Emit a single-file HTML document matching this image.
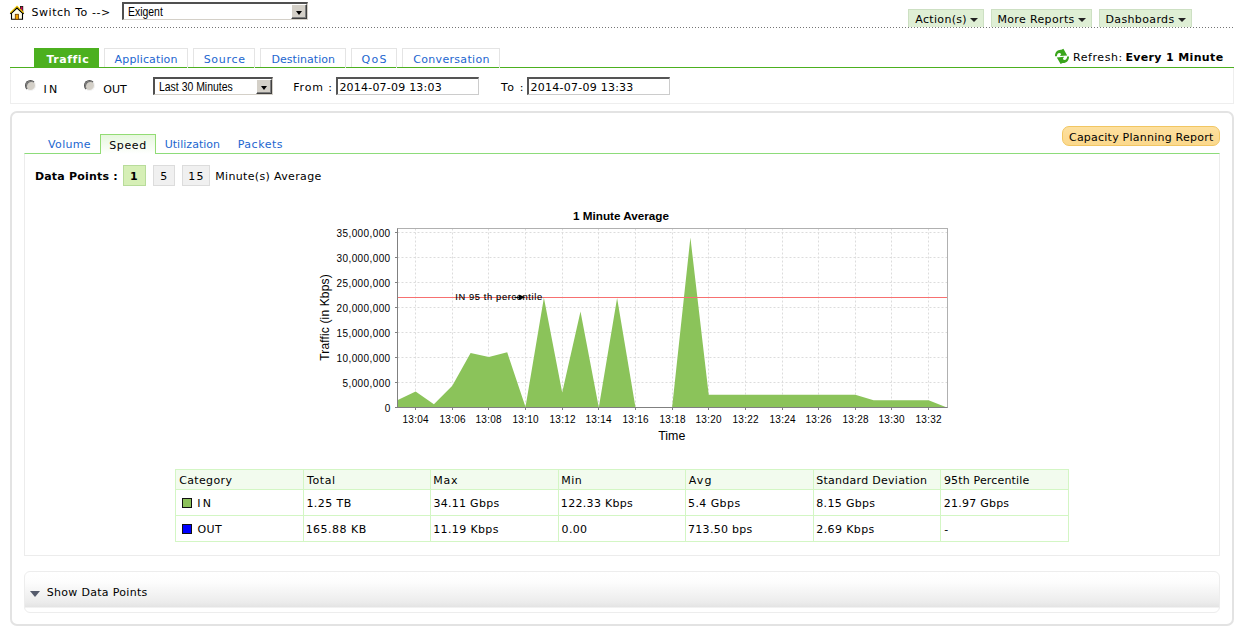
<!DOCTYPE html>
<html>
<head>
<meta charset="utf-8">
<title>Traffic Report</title>
<style>
html,body{margin:0;padding:0;background:#fff;}
body{width:1239px;height:633px;position:relative;overflow:hidden;font-family:"DejaVu Sans","Liberation Sans",sans-serif;font-size:11px;color:#000;}
.a{position:absolute;white-space:nowrap;box-sizing:border-box;}
.t{position:absolute;white-space:nowrap;font-size:11px;line-height:14px;z-index:5;}
.dots{position:absolute;left:11px;top:27px;width:1223px;height:1px;background:repeating-linear-gradient(90deg,#757575 0,#757575 1px,transparent 1px,transparent 3px);}
.btn{position:absolute;top:9px;height:18px;background:#dfefd5;border:1px solid #cde0c3;border-bottom:none;box-sizing:border-box;}
.caret{position:absolute;top:8px;width:0;height:0;border-left:4px solid transparent;border-right:4px solid transparent;border-top:4px solid #222;}
.tab{position:absolute;top:48px;height:19px;box-sizing:border-box;border:1px solid #e4e4e4;border-bottom:none;background:#fff;}
.tab.on{background:#4cb01f;border-color:#4cb01f;}
.sel{position:absolute;box-sizing:border-box;background:#fff;border:2px solid;border-color:#505050 #d4d0c8 #d4d0c8 #505050;border-right-width:1px;border-bottom-width:1px;font-family:"Liberation Sans",sans-serif;font-size:12px;}
.sel .arrow{position:absolute;right:0;top:0;bottom:0;width:16px;background:#d4d0c8;border:1px solid;border-color:#fff #404040 #404040 #fff;box-shadow:inset -1px -1px 0 #808080;box-sizing:border-box;}
.sel .arrow:after{content:"";position:absolute;left:3.5px;top:6px;border:3.5px solid transparent;border-top:4px solid #000;border-bottom:none;}
.sel .st{position:absolute;top:1px;line-height:14px;transform:scaleX(0.87);transform-origin:0 0;white-space:nowrap;}
.inp{position:absolute;box-sizing:border-box;background:#fff;border:1px solid;border-color:#555 #ccc #ccc #555;border-top-width:2px;border-left-width:2px;}
.radio{position:absolute;width:11px;height:11px;border-radius:50%;box-sizing:border-box;background:#d4d0c8;border:1px solid;border-color:#555 #f4f4f4 #f4f4f4 #555;box-shadow:inset 1px 1px 0 #777;transform:rotate(0deg);}
.hl{position:absolute;height:1px;background:#d3f6c4;}
.vl{position:absolute;width:1px;background:#d3f6c4;}
.sw{position:absolute;width:10px;height:10px;box-sizing:border-box;border:1px solid #111;}
</style>
</head>
<body>

<!-- top bar -->
<svg class="a" style="left:8px;top:4px" width="18" height="18" viewBox="8 4 18 18">
  <rect x="20.4" y="6.4" width="2.4" height="5.5" fill="#e0004a" stroke="#111" stroke-width="0.8"/>
  <path d="M11.5 13.2 L17 8 L22.5 13.2 L22.5 19.3 L11.5 19.3 Z" fill="#fffde8" stroke="#000" stroke-width="1.1"/>
  <path d="M10.3 13.7 L17 7.3 L23.7 13.7" fill="none" stroke="#000" stroke-width="1.5"/>
  <path d="M10.4 12.7 L17 6.3 L23.6 12.7" fill="none" stroke="#f0c808" stroke-width="1.2"/>
  <rect x="15.3" y="14.3" width="3.2" height="5" fill="#f5a800" stroke="#6b3a00" stroke-width="0.8"/>
</svg>
<div class="sel" style="left:122px;top:2px;width:186px;height:18px;"><span class="st" style="left:3.8px;">Exigent</span><span class="arrow"></span></div>
<div class="dots"></div>

<div class="btn" style="left:908px;width:76px;"><span class="caret" style="left:61px"></span></div>
<div class="btn" style="left:991px;width:101px;"><span class="caret" style="left:86px"></span></div>
<div class="btn" style="left:1099px;width:93px;"><span class="caret" style="left:78px"></span></div>

<!-- main tabs -->
<div class="tab on" style="left:34px;width:65px;"></div>
<div class="tab" style="left:104px;width:84px;"></div>
<div class="tab" style="left:193px;width:62px;"></div>
<div class="tab" style="left:260px;width:86px;"></div>
<div class="tab" style="left:351px;width:46px;"></div>
<div class="tab" style="left:402px;width:98px;"></div>
<div class="a" style="left:10px;top:67px;width:1224px;height:1px;background:#4cb01f;"></div>
<div class="a" style="left:187px;top:67px;width:1px;height:1px;background:#e4efe0;z-index:3"></div><div class="a" style="left:254px;top:67px;width:1px;height:1px;background:#e4efe0;z-index:3"></div><div class="a" style="left:345px;top:67px;width:1px;height:1px;background:#e4efe0;z-index:3"></div><div class="a" style="left:396px;top:67px;width:1px;height:1px;background:#e4efe0;z-index:3"></div><div class="a" style="left:499px;top:67px;width:1px;height:1px;background:#e4efe0;z-index:3"></div>
<div class="a" style="left:10px;top:68px;width:1224px;height:36px;border:1px solid #eeeeee;border-top:none;"></div>

<!-- refresh -->
<svg class="a" style="left:1053px;top:48px" width="18" height="17" viewBox="1053 48 18 17">
  <g fill="#3aa51c">
  <path id="rf" d="M1055 56.3 C1054.8 52.4 1057.6 49.5 1061.4 49.8 L1063.4 48.7 L1067.2 55.4 L1060 56.1 L1061.2 53.9 C1059.6 52.0 1057 52.8 1056.9 56.3 Z"/>
  <path d="M1055 56.3 C1054.8 52.4 1057.6 49.5 1061.4 49.8 L1063.4 48.7 L1067.2 55.4 L1060 56.1 L1061.2 53.9 C1059.6 52.0 1057 52.8 1056.9 56.3 Z" transform="rotate(180 1062 56.4)"/>
  </g>
</svg>

<!-- filter row -->
<div class="radio" style="left:25px;top:80px"></div>
<div class="radio" style="left:84px;top:80px"></div>
<div class="sel" style="left:153px;top:77px;width:120px;height:18px;"><span class="st" style="left:3.5px;">Last 30 Minutes</span><span class="arrow"></span></div>
<div class="inp" style="left:336px;top:77px;width:143px;height:18px;"></div>
<div class="inp" style="left:527px;top:77px;width:143px;height:18px;"></div>

<!-- outer panel -->
<div class="a" style="left:10px;top:111px;width:1224px;height:515px;border:2px solid #e3e3e3;border-radius:7px;"></div>

<!-- sub tabs -->
<div class="a" style="left:100px;top:134px;width:56px;height:20px;border:1px solid #93dc74;border-bottom:none;background:linear-gradient(#e6f7dd,#fff);z-index:2"></div>
<div class="a" style="left:24px;top:153px;width:1196px;height:403px;border:1px solid #ececec;border-top:1px solid #8ddc7a;"></div>

<div class="a" style="left:1062px;top:126px;width:158px;height:20px;border:1px solid #f1c662;border-radius:7px;background:linear-gradient(#fde09f,#fbd88c);"></div>

<!-- data points -->
<div class="a" style="left:123px;top:165px;width:23px;height:21px;border:1px solid #b8dc9a;background:#d6efb6;"></div>
<div class="a" style="left:153px;top:165px;width:22px;height:21px;border:1px solid #dcdcdc;background:#f0f0f0;"></div>
<div class="a" style="left:182px;top:165px;width:28px;height:21px;border:1px solid #dcdcdc;background:#f0f0f0;"></div>

<svg class="a" id="chart" style="left:300px;top:200px" width="680" height="250" viewBox="300 200 680 250" font-family="Liberation Sans, sans-serif">
<rect x="397.5" y="228.5" width="550.0" height="179.0" fill="#fff" stroke="none"/>
<line x1="397.5" y1="407.5" x2="947.5" y2="407.5" stroke="#dcdcdc" stroke-width="1" stroke-dasharray="2 2"/>
<line x1="397.5" y1="382.5" x2="947.5" y2="382.5" stroke="#dcdcdc" stroke-width="1" stroke-dasharray="2 2"/>
<line x1="397.5" y1="357.5" x2="947.5" y2="357.5" stroke="#dcdcdc" stroke-width="1" stroke-dasharray="2 2"/>
<line x1="397.5" y1="332.5" x2="947.5" y2="332.5" stroke="#dcdcdc" stroke-width="1" stroke-dasharray="2 2"/>
<line x1="397.5" y1="307.5" x2="947.5" y2="307.5" stroke="#dcdcdc" stroke-width="1" stroke-dasharray="2 2"/>
<line x1="397.5" y1="282.5" x2="947.5" y2="282.5" stroke="#dcdcdc" stroke-width="1" stroke-dasharray="2 2"/>
<line x1="397.5" y1="257.5" x2="947.5" y2="257.5" stroke="#dcdcdc" stroke-width="1" stroke-dasharray="2 2"/>
<line x1="397.5" y1="232.5" x2="947.5" y2="232.5" stroke="#dcdcdc" stroke-width="1" stroke-dasharray="2 2"/>
<line x1="415.5" y1="228.5" x2="415.5" y2="407.5" stroke="#dcdcdc" stroke-width="1" stroke-dasharray="2 2"/>
<line x1="452.5" y1="228.5" x2="452.5" y2="407.5" stroke="#dcdcdc" stroke-width="1" stroke-dasharray="2 2"/>
<line x1="488.5" y1="228.5" x2="488.5" y2="407.5" stroke="#dcdcdc" stroke-width="1" stroke-dasharray="2 2"/>
<line x1="525.5" y1="228.5" x2="525.5" y2="407.5" stroke="#dcdcdc" stroke-width="1" stroke-dasharray="2 2"/>
<line x1="562.5" y1="228.5" x2="562.5" y2="407.5" stroke="#dcdcdc" stroke-width="1" stroke-dasharray="2 2"/>
<line x1="598.5" y1="228.5" x2="598.5" y2="407.5" stroke="#dcdcdc" stroke-width="1" stroke-dasharray="2 2"/>
<line x1="635.5" y1="228.5" x2="635.5" y2="407.5" stroke="#dcdcdc" stroke-width="1" stroke-dasharray="2 2"/>
<line x1="672.5" y1="228.5" x2="672.5" y2="407.5" stroke="#dcdcdc" stroke-width="1" stroke-dasharray="2 2"/>
<line x1="708.5" y1="228.5" x2="708.5" y2="407.5" stroke="#dcdcdc" stroke-width="1" stroke-dasharray="2 2"/>
<line x1="745.5" y1="228.5" x2="745.5" y2="407.5" stroke="#dcdcdc" stroke-width="1" stroke-dasharray="2 2"/>
<line x1="782.5" y1="228.5" x2="782.5" y2="407.5" stroke="#dcdcdc" stroke-width="1" stroke-dasharray="2 2"/>
<line x1="818.5" y1="228.5" x2="818.5" y2="407.5" stroke="#dcdcdc" stroke-width="1" stroke-dasharray="2 2"/>
<line x1="855.5" y1="228.5" x2="855.5" y2="407.5" stroke="#dcdcdc" stroke-width="1" stroke-dasharray="2 2"/>
<line x1="891.5" y1="228.5" x2="891.5" y2="407.5" stroke="#dcdcdc" stroke-width="1" stroke-dasharray="2 2"/>
<line x1="928.5" y1="228.5" x2="928.5" y2="407.5" stroke="#dcdcdc" stroke-width="1" stroke-dasharray="2 2"/>
<polygon points="397.3,407.5 397.3,400.3 415.6,391.5 433.9,404.3 452.3,385.7 470.6,353.0 488.9,357.0 507.2,352.3 525.5,407.0 543.9,297.7 562.2,392.5 580.5,311.5 598.8,407.5 617.1,298.0 635.5,407.5 653.8,407.5 672.1,407.5 690.4,237.5 708.7,394.7 727.1,394.7 745.4,394.7 763.7,394.7 782.0,394.7 800.3,394.7 818.7,394.7 837.0,394.7 855.3,394.7 873.6,400.2 891.9,400.2 910.3,400.2 928.6,400.2 946.9,407.5 946.9,407.5" fill="#8bc35a"/>
<line x1="397.5" y1="297.5" x2="947.5" y2="297.5" stroke="#f77070" stroke-width="1"/>
<text x="455.2" y="299.5" font-size="9.3" fill="#000" stroke="#000" stroke-width="0.12" letter-spacing="0.64">IN 95 th percentile</text>
<path d="M514.5 297.5 H520" stroke="#000" stroke-width="1" fill="none"/><path d="M518.8 294.4 L525 297.3 L518.8 300 Z" fill="#000"/>
<rect x="397.5" y="228.5" width="550.0" height="179.0" fill="none" stroke="#b0b0b0" stroke-width="1"/>
<line x1="397.5" y1="228.5" x2="397.5" y2="408.0" stroke="#808080" stroke-width="1"/>
<line x1="397.5" y1="407.5" x2="947.5" y2="407.5" stroke="#808080" stroke-width="1"/>
<line x1="395.0" y1="407.5" x2="397.5" y2="407.5" stroke="#808080" stroke-width="1"/>
<text x="390.6" y="412.4" font-size="10" letter-spacing="0.4" text-anchor="end">0</text>
<line x1="395.0" y1="382.5" x2="397.5" y2="382.5" stroke="#808080" stroke-width="1"/>
<text x="390.6" y="387.4" font-size="10" letter-spacing="0.4" text-anchor="end">5,000,000</text>
<line x1="395.0" y1="357.5" x2="397.5" y2="357.5" stroke="#808080" stroke-width="1"/>
<text x="390.6" y="362.4" font-size="10" letter-spacing="0.4" text-anchor="end">10,000,000</text>
<line x1="395.0" y1="332.5" x2="397.5" y2="332.5" stroke="#808080" stroke-width="1"/>
<text x="390.6" y="337.4" font-size="10" letter-spacing="0.4" text-anchor="end">15,000,000</text>
<line x1="395.0" y1="307.5" x2="397.5" y2="307.5" stroke="#808080" stroke-width="1"/>
<text x="390.6" y="312.4" font-size="10" letter-spacing="0.4" text-anchor="end">20,000,000</text>
<line x1="395.0" y1="282.5" x2="397.5" y2="282.5" stroke="#808080" stroke-width="1"/>
<text x="390.6" y="287.4" font-size="10" letter-spacing="0.4" text-anchor="end">25,000,000</text>
<line x1="395.0" y1="257.5" x2="397.5" y2="257.5" stroke="#808080" stroke-width="1"/>
<text x="390.6" y="262.4" font-size="10" letter-spacing="0.4" text-anchor="end">30,000,000</text>
<line x1="395.0" y1="232.5" x2="397.5" y2="232.5" stroke="#808080" stroke-width="1"/>
<text x="390.6" y="237.4" font-size="10" letter-spacing="0.4" text-anchor="end">35,000,000</text>
<line x1="415.5" y1="407.5" x2="415.5" y2="410.0" stroke="#808080" stroke-width="1"/>
<text x="415.7" y="423.4" font-size="10" letter-spacing="0.3" text-anchor="middle">13:04</text>
<line x1="452.5" y1="407.5" x2="452.5" y2="410.0" stroke="#808080" stroke-width="1"/>
<text x="452.7" y="423.4" font-size="10" letter-spacing="0.3" text-anchor="middle">13:06</text>
<line x1="488.5" y1="407.5" x2="488.5" y2="410.0" stroke="#808080" stroke-width="1"/>
<text x="488.7" y="423.4" font-size="10" letter-spacing="0.3" text-anchor="middle">13:08</text>
<line x1="525.5" y1="407.5" x2="525.5" y2="410.0" stroke="#808080" stroke-width="1"/>
<text x="525.7" y="423.4" font-size="10" letter-spacing="0.3" text-anchor="middle">13:10</text>
<line x1="562.5" y1="407.5" x2="562.5" y2="410.0" stroke="#808080" stroke-width="1"/>
<text x="562.7" y="423.4" font-size="10" letter-spacing="0.3" text-anchor="middle">13:12</text>
<line x1="598.5" y1="407.5" x2="598.5" y2="410.0" stroke="#808080" stroke-width="1"/>
<text x="598.7" y="423.4" font-size="10" letter-spacing="0.3" text-anchor="middle">13:14</text>
<line x1="635.5" y1="407.5" x2="635.5" y2="410.0" stroke="#808080" stroke-width="1"/>
<text x="635.7" y="423.4" font-size="10" letter-spacing="0.3" text-anchor="middle">13:16</text>
<line x1="672.5" y1="407.5" x2="672.5" y2="410.0" stroke="#808080" stroke-width="1"/>
<text x="672.7" y="423.4" font-size="10" letter-spacing="0.3" text-anchor="middle">13:18</text>
<line x1="708.5" y1="407.5" x2="708.5" y2="410.0" stroke="#808080" stroke-width="1"/>
<text x="708.7" y="423.4" font-size="10" letter-spacing="0.3" text-anchor="middle">13:20</text>
<line x1="745.5" y1="407.5" x2="745.5" y2="410.0" stroke="#808080" stroke-width="1"/>
<text x="745.7" y="423.4" font-size="10" letter-spacing="0.3" text-anchor="middle">13:22</text>
<line x1="782.5" y1="407.5" x2="782.5" y2="410.0" stroke="#808080" stroke-width="1"/>
<text x="782.7" y="423.4" font-size="10" letter-spacing="0.3" text-anchor="middle">13:24</text>
<line x1="818.5" y1="407.5" x2="818.5" y2="410.0" stroke="#808080" stroke-width="1"/>
<text x="818.7" y="423.4" font-size="10" letter-spacing="0.3" text-anchor="middle">13:26</text>
<line x1="855.5" y1="407.5" x2="855.5" y2="410.0" stroke="#808080" stroke-width="1"/>
<text x="855.7" y="423.4" font-size="10" letter-spacing="0.3" text-anchor="middle">13:28</text>
<line x1="891.5" y1="407.5" x2="891.5" y2="410.0" stroke="#808080" stroke-width="1"/>
<text x="891.7" y="423.4" font-size="10" letter-spacing="0.3" text-anchor="middle">13:30</text>
<line x1="928.5" y1="407.5" x2="928.5" y2="410.0" stroke="#808080" stroke-width="1"/>
<text x="928.7" y="423.4" font-size="10" letter-spacing="0.3" text-anchor="middle">13:32</text>
<text x="621" y="220" font-size="11.7" font-weight="bold" text-anchor="middle">1 Minute Average</text>
<text x="671.8" y="440.3" font-size="12.4" text-anchor="middle">Time</text>
<text transform="translate(328.6,317.5) rotate(-90)" font-size="12" letter-spacing="0.15" text-anchor="middle">Traffic (in Kbps)</text>
</svg>

<!-- stats table -->
<div class="a" style="left:175px;top:469px;width:894px;height:20px;background:#f2fbee;"></div>
<div class="hl" style="left:175px;top:469px;width:894px"></div>
<div class="hl" style="left:175px;top:489px;width:894px"></div>
<div class="hl" style="left:175px;top:515px;width:894px"></div>
<div class="hl" style="left:175px;top:541px;width:894px"></div>
<div class="vl" style="left:175px;top:469px;height:73px"></div>
<div class="vl" style="left:303px;top:469px;height:73px"></div>
<div class="vl" style="left:430px;top:469px;height:73px"></div>
<div class="vl" style="left:558px;top:469px;height:73px"></div>
<div class="vl" style="left:685px;top:469px;height:73px"></div>
<div class="vl" style="left:813px;top:469px;height:73px"></div>
<div class="vl" style="left:940px;top:469px;height:73px"></div>
<div class="vl" style="left:1068px;top:469px;height:73px"></div>
<div class="sw" style="left:182px;top:498px;background:#8cc15a"></div>
<div class="sw" style="left:182px;top:524px;background:#0000ff"></div>

<!-- show data points -->
<div class="a" style="left:24px;top:571px;width:1196px;height:42px;border:1px solid #ededed;border-radius:6px;background:linear-gradient(#fff 0px,#fdfdfd 10px,#ececec 30px,#e4e4e4 35px,#fff 36px,#fff 100%);"></div>
<div class="a" style="left:30px;top:590.5px;width:0;height:0;border:5.5px solid transparent;border-top:6px solid #555b6c;border-bottom:none;"></div>

<span class="t" id="switch" style="left:31.43px;top:6.00px;letter-spacing:0.561px;">Switch To --&gt;</span>
<span class="t" id="b1" style="left:915.37px;top:13.00px;letter-spacing:0.314px;">Action(s)</span>
<span class="t" id="b2" style="left:997.45px;top:13.00px;letter-spacing:0.357px;">More Reports</span>
<span class="t" id="b3" style="left:1105.53px;top:13.00px;letter-spacing:0.357px;">Dashboards</span>
<span class="t" id="tab1" style="left:46.38px;top:53.00px;letter-spacing:0.551px;color:#fff;font-weight:bold;">Traffic</span>
<span class="t" id="tab2" style="left:114.62px;top:53.00px;letter-spacing:0.136px;color:#1c66cf;">Application</span>
<span class="t" id="tab3" style="left:203.67px;top:53.00px;letter-spacing:0.694px;color:#1c66cf;">Source</span>
<span class="t" id="tab4" style="left:271.43px;top:53.00px;letter-spacing:0.044px;color:#1c66cf;">Destination</span>
<span class="t" id="tab5" style="left:361.61px;top:53.00px;letter-spacing:1.311px;color:#1c66cf;">QoS</span>
<span class="t" id="tab6" style="left:413.25px;top:53.00px;letter-spacing:0.314px;color:#1c66cf;">Conversation</span>
<span class="t" id="refresh" style="left:1072.96px;top:51.00px;letter-spacing:0.579px;">Refresh:</span>
<span class="t" id="every" style="left:1125.38px;top:51.00px;letter-spacing:0.352px;font-weight:bold;">Every 1 Minute</span>
<span class="t" id="in" style="left:43.47px;top:83.00px;letter-spacing:2.373px;">IN</span>
<span class="t" id="out" style="left:103.35px;top:83.00px;letter-spacing:-0.052px;">OUT</span>
<span class="t" id="from" style="left:293.13px;top:81.00px;letter-spacing:0.885px;">From :</span>
<span class="t" id="inp1" style="left:339.38px;top:81.00px;letter-spacing:0.213px;">2014-07-09 13:03</span>
<span class="t" id="to" style="left:501.06px;top:81.00px;letter-spacing:1.246px;">To :</span>
<span class="t" id="inp2" style="left:530.56px;top:81.00px;letter-spacing:0.246px;">2014-07-09 13:33</span>
<span class="t" id="st1" style="left:48.09px;top:138.00px;letter-spacing:0.329px;color:#1c66cf;">Volume</span>
<span class="t" id="st2" style="left:109.16px;top:139.00px;letter-spacing:0.634px;">Speed</span>
<span class="t" id="st3" style="left:164.66px;top:138.00px;letter-spacing:0.032px;color:#1c66cf;">Utilization</span>
<span class="t" id="st4" style="left:237.66px;top:138.00px;letter-spacing:0.537px;color:#1c66cf;">Packets</span>
<span class="t" id="cap" style="left:1068.97px;top:131.00px;letter-spacing:0.232px;">Capacity Planning Report</span>
<span class="t" id="dp" style="left:34.90px;top:170.00px;letter-spacing:0.207px;font-weight:bold;">Data Points :</span>
<span class="t" id="dp1" style="left:130.11px;top:170.00px;letter-spacing:0.400px;font-weight:bold;">1</span>
<span class="t" id="dp5" style="left:160.16px;top:170.00px;letter-spacing:0.400px;">5</span>
<span class="t" id="dp15" style="left:188.13px;top:170.00px;letter-spacing:1.375px;">15</span>
<span class="t" id="mavg" style="left:215.19px;top:170.00px;letter-spacing:0.345px;">Minute(s) Average</span>
<span class="t" id="h1" style="left:179.18px;top:474.00px;letter-spacing:0.360px;">Category</span>
<span class="t" id="h2" style="left:307.00px;top:474.00px;letter-spacing:0.599px;">Total</span>
<span class="t" id="h3" style="left:433.33px;top:474.00px;letter-spacing:0.667px;">Max</span>
<span class="t" id="h4" style="left:561.33px;top:474.00px;letter-spacing:0.402px;">Min</span>
<span class="t" id="h5" style="left:688.77px;top:474.00px;letter-spacing:1.123px;">Avg</span>
<span class="t" id="h6" style="left:816.17px;top:474.00px;letter-spacing:0.279px;">Standard Deviation</span>
<span class="t" id="h7" style="left:943.94px;top:474.00px;letter-spacing:0.156px;">95th Percentile</span>
<span class="t" id="r11" style="left:197.15px;top:497.00px;letter-spacing:2.322px;">IN</span>
<span class="t" id="r12" style="left:306.45px;top:497.00px;letter-spacing:0.425px;">1.25 TB</span>
<span class="t" id="r13" style="left:433.51px;top:497.00px;letter-spacing:0.270px;">34.11 Gbps</span>
<span class="t" id="r14" style="left:560.87px;top:497.00px;letter-spacing:0.306px;">122.33 Kbps</span>
<span class="t" id="r15" style="left:688.03px;top:497.00px;letter-spacing:0.415px;">5.4 Gbps</span>
<span class="t" id="r16" style="left:816.29px;top:497.00px;letter-spacing:0.326px;">8.15 Gbps</span>
<span class="t" id="r17" style="left:943.87px;top:497.00px;letter-spacing:0.224px;">21.97 Gbps</span>
<span class="t" id="r21" style="left:197.61px;top:523.00px;letter-spacing:0.297px;">OUT</span>
<span class="t" id="r22" style="left:305.63px;top:523.00px;letter-spacing:0.488px;">165.88 KB</span>
<span class="t" id="r23" style="left:433.25px;top:523.00px;letter-spacing:0.364px;">11.19 Kbps</span>
<span class="t" id="r24" style="left:561.57px;top:523.00px;letter-spacing:0.352px;">0.00</span>
<span class="t" id="r25" style="left:688.03px;top:523.00px;letter-spacing:0.289px;">713.50 bps</span>
<span class="t" id="r26" style="left:816.36px;top:523.00px;letter-spacing:0.377px;">2.69 Kbps</span>
<span class="t" id="r27" style="left:944.14px;top:523.00px;letter-spacing:0.400px;">-</span>
<span class="t" id="sdp" style="left:46.67px;top:586.00px;letter-spacing:0.314px;">Show Data Points</span>

</body>
</html>
